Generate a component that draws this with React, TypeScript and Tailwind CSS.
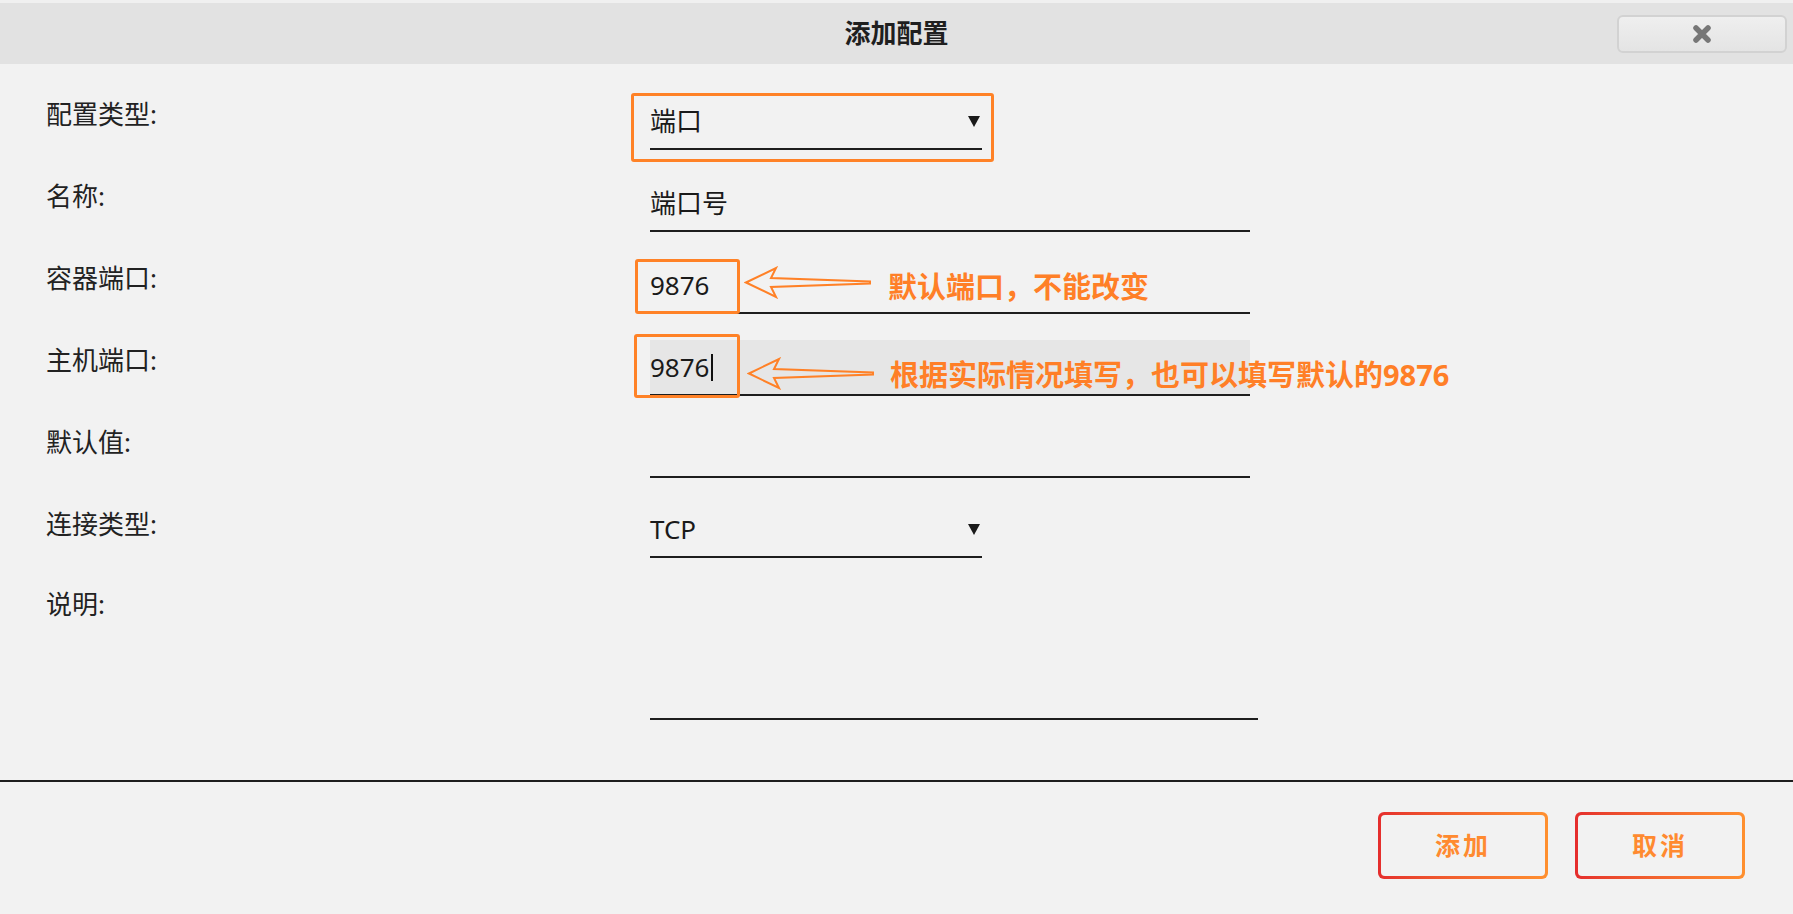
import React from "react";

const FONT = "font-['Noto_Sans','Noto_Sans_CJK_SC',sans-serif]";

const HintArrow = ({ className }: { className: string }) => (
  <svg
    width="128"
    height="33"
    viewBox="0 0 128 33"
    className={className}
    fill="none"
  >
    <polygon
      points="2,16.5 32,2 27,12 126,15.5 126,17.5 27,21 32,31"
      stroke="#ff8127"
      strokeWidth="2"
      strokeLinejoin="miter"
    />
  </svg>
);

const Caret = () => (
  <svg width="12" height="11" viewBox="0 0 12 11" className="shrink-0">
    <polygon points="0,0 12,0 6,11" fill="#1a1a1a" />
  </svg>
);

const Row = ({
  label,
  height = "h-[82px]",
  children,
}: {
  label: string;
  height?: string;
  children: React.ReactNode;
}) => (
  <div className={`flex ${height}`}>
    <div className="w-[650px] shrink-0 pl-[46px] pt-[30px] text-[26px] leading-[32px] text-[#222]">
      {label}
    </div>
    <div className="flex flex-col justify-end">{children}</div>
  </div>
);

export default function App() {
  return (
    <div className={`min-h-screen bg-[#f2f2f2] ${FONT}`}>
      {/* Title bar */}
      <div className="bg-[#f0f0f0] pt-[3px]">
        <div className="relative flex h-[61px] items-center justify-center bg-[#e2e2e2]">
          <h1 className="text-[26px] font-bold text-[#1f1f1f]">添加配置</h1>
          <button className="absolute right-[6px] top-[12px] flex h-[38px] w-[170px] items-center justify-center rounded-md border-2 border-[#d2d2d2] bg-linear-to-b from-[#efefef] to-[#e4e4e4]">
            <svg width="20" height="20" viewBox="0 0 20 20">
              <path
                d="M4 4 L16 16 M16 4 L4 16"
                stroke="#777"
                strokeWidth="5.5"
                strokeLinecap="round"
              />
            </svg>
          </button>
        </div>
      </div>

      {/* Form */}
      <div className="pt-1">
        <Row label="配置类型:">
          <div className="relative flex h-[56px] w-[332px] items-center justify-between border-b-2 border-[#1e1e1e] pr-[2px] text-[26px] text-[#1a1a1a]">
            <span>端口</span>
            <Caret />
            <div className="absolute -left-[19px] -top-[1px] h-[69px] w-[363px] rounded-[3px] border-[3px] border-[#ff8227]" />
          </div>
        </Row>

        <Row label="名称:">
          <div className="flex h-[56px] w-[600px] items-center border-b-2 border-[#1e1e1e] text-[26px] text-[#1a1a1a]">
            端口号
          </div>
        </Row>

        <Row label="容器端口:">
          <div className="relative flex h-[56px] w-[600px] items-center border-b-2 border-[#1e1e1e] text-[26px] text-[#1a1a1a]">
            <span>9876</span>
            <div className="absolute -left-[15px] top-[1px] h-[55px] w-[105px] rounded-[3px] border-[3px] border-[#ff8227] bg-[#f2f2f2]">
              <span className="absolute left-[12px] top-[calc(50%-2px)] -translate-y-1/2">
                9876
              </span>
            </div>
            <HintArrow className="absolute left-[94px] top-[8px]" />
            <span className="absolute left-[238px] top-[9px] whitespace-nowrap text-[29px] font-bold leading-[40px] text-[#ff7f27]">
              默认端口，不能改变
            </span>
          </div>
        </Row>

        <Row label="主机端口:">
          <div className="relative flex h-[56px] w-[600px] items-center border-b-2 border-[#1e1e1e] bg-[#e6e6e6] text-[26px] text-[#1a1a1a]">
            <span>9876</span>
            <span className="ml-[1px] h-[27px] w-[2px] bg-[#111]" />
            <div className="absolute -left-[16px] -top-[6px] h-[64px] w-[106px] rounded-[3px] border-[3px] border-[#ff8227]" />
            <HintArrow className="absolute left-[97px] top-[17px]" />
            <span className="absolute left-[240px] top-[15px] whitespace-nowrap text-[29px] font-bold leading-[40px] text-[#ff7f27]">
              根据实际情况填写，也可以填写默认的9876
            </span>
          </div>
        </Row>

        <Row label="默认值:">
          <div className="h-[56px] w-[600px] border-b-2 border-[#1e1e1e]" />
        </Row>

        <Row label="连接类型:" height="h-[80px]">
          <div className="flex h-[56px] w-[332px] items-center justify-between border-b-2 border-[#1e1e1e] pr-[2px] text-[26px] text-[#1a1a1a]">
            <span>TCP</span>
            <Caret />
          </div>
        </Row>

        <Row label="说明:" height="h-[162px]">
          <div className="h-[162px] w-[608px] border-b-2 border-[#1e1e1e]" />
        </Row>
      </div>

      {/* Footer */}
      <div className="mt-[60px] border-t-2 border-[#1e1e1e]">
        <div className="flex justify-end gap-[27px] pr-[48px] pt-[30px]">
          {["添加", "取消"].map((t) => (
            <button
              key={t}
              className="h-[67px] w-[170px] rounded-[6px] bg-linear-to-r from-[#e52d2d] to-[#ff902f] p-[3px]"
            >
              <span className="flex h-full w-full items-center justify-center rounded-[4px] bg-[#f2f2f2] text-[25px] font-bold tracking-[3px] text-[#ff8a30]">
                {t}
              </span>
            </button>
          ))}
        </div>
      </div>
    </div>
  );
}
